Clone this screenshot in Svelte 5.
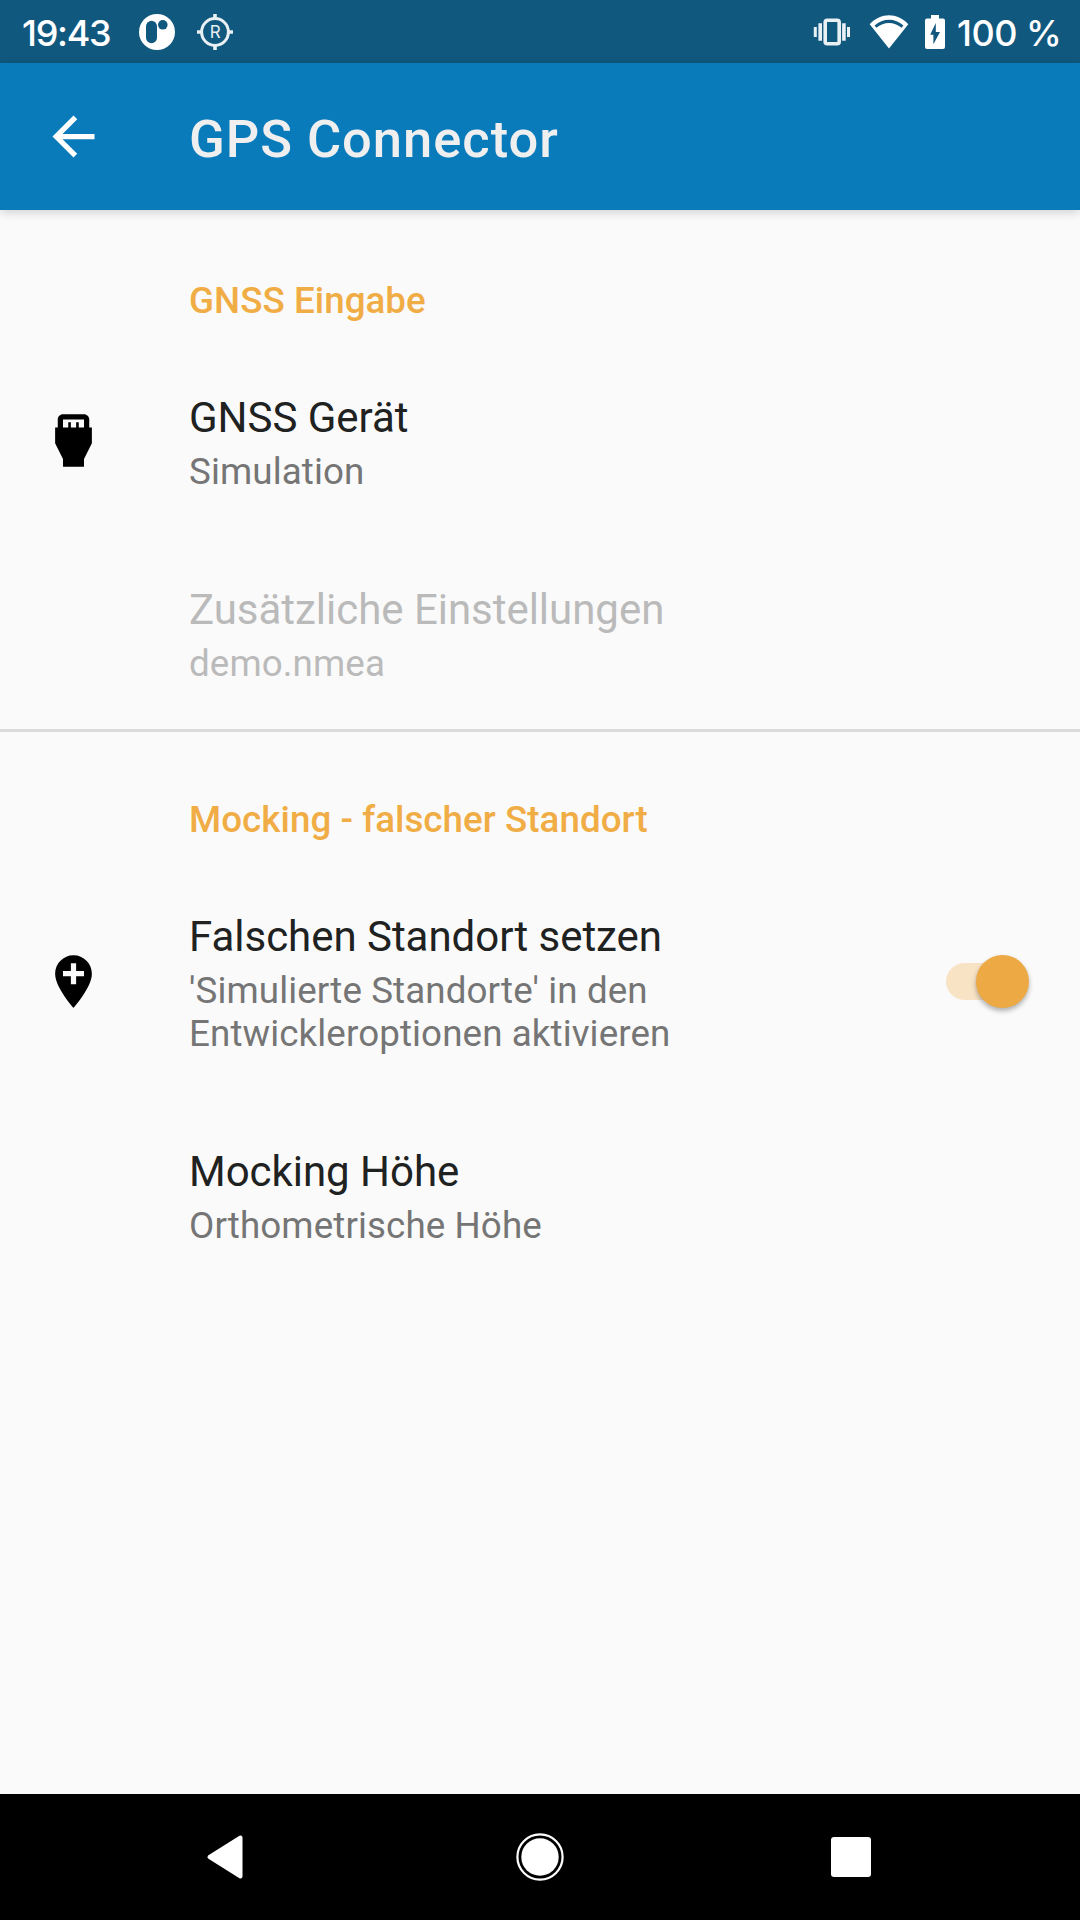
<script lang="ts">
  let mocking = true;

  function toggleMocking() {
    mocking = !mocking;
  }
</script>

<div class="screen">
  <div class="status">
    <span class="clock">19:43</span>
    <svg class="app-icon" width="38" height="38" viewBox="0 0 38 38">
      <circle cx="19" cy="19" r="18" fill="#fff" />
      <rect x="8" y="7.8" width="11" height="22.4" rx="5.5" fill="#11587f" />
      <circle cx="24.8" cy="11.8" r="4.8" fill="#11587f" />
    </svg>
    <svg width="38" height="38" viewBox="0 0 38 38">
      <circle cx="19" cy="19" r="13.4" fill="none" stroke="#e9f0f4" stroke-width="3" />
      <path d="M19 1v5M19 32v5M1 19h5M32 19h5" stroke="#e9f0f4" stroke-width="3.6" />
      <text x="19.2" y="25" text-anchor="middle">R</text>
    </svg>
    <span class="spacer"></span>
    <svg class="vibrate" width="38" height="28" viewBox="0 0 38 28">
      <rect x="12.2" y="2.2" width="14" height="23.6" rx="2" fill="none" stroke="#e9f0f4" stroke-width="3.6" />
      <path d="M2.3 9v10M35.5 9v10" stroke="#e9f0f4" stroke-width="3" />
      <path d="M7.2 5.3v17.4M30.9 5.3v17.4" stroke="#e9f0f4" stroke-width="3.6" />
    </svg>
    <svg class="wifi" width="40" height="34" viewBox="0 0 40 34">
      <path d="M.7 9.2C12-2.6 28-2.6 39.3 9.2L20 33.4Z" fill="#fff" />
      <path d="M5.6 10.5C14 2.9 26 2.9 34.4 10.5L32.6 12.8C25 6.5 15 6.5 7.4 12.8Z" fill="#11587f" />
    </svg>
    <svg class="battery" width="20" height="34" viewBox="0 0 20 34">
      <path d="M6 0h8v3.4h4a2 2 0 0 1 2 2V32a2 2 0 0 1-2 2H2a2 2 0 0 1-2-2V5.4a2 2 0 0 1 2-2h4Z" fill="#fff" />
      <path d="M10.8 8v9h4.2L8.4 29.2v-9.4H5.2Z" fill="#11587f" />
    </svg>
    <span class="level">100 %</span>
  </div>

  <header>
    <svg width="63" height="63" viewBox="0 0 24 24">
      <path d="M20 11H7.83l5.59-5.59L12 4l-8 8 8 8 1.41-1.41L7.83 13H20v-2z" fill="#fff" />
    </svg>
    <h1>GPS Connector</h1>
  </header>

  <main>
    <section>
      <h2>GNSS Eingabe</h2>
      <div class="pref">
        <div class="icon">
          <svg width="63" height="63" viewBox="0 0 24 24">
            <path d="M18 7V4c0-1.1-.9-2-2-2H8c-1.1 0-2 .9-2 2v3H5v6l3 6v3h8v-3l3-6V7h-1zM8 4h8v3h-2V5h-1v2h-2V5h-1v2H8V4z" />
          </svg>
        </div>
        <div class="body">
          <div class="title">GNSS Gerät</div>
          <div class="summary">Simulation</div>
        </div>
      </div>
      <div class="pref disabled">
        <div class="icon"></div>
        <div class="body">
          <div class="title">Zusätzliche Einstellungen</div>
          <div class="summary">demo.nmea</div>
        </div>
      </div>
    </section>

    <section class="divided">
      <h2>Mocking - falscher Standort</h2>
      <div class="pref">
        <div class="icon">
          <svg width="63" height="63" viewBox="0 0 24 24">
            <path d="M12 2C8.14 2 5 5.14 5 9c0 5.25 7 13 7 13s7-7.75 7-13c0-3.86-3.14-7-7-7zm4 8h-3v3h-2v-3H8V8h3V5h2v3h3v2z" />
          </svg>
        </div>
        <div class="body">
          <div class="title">Falschen Standort setzen</div>
          <div class="summary">'Simulierte Standorte' in den<br />Entwickleroptionen aktivieren</div>
        </div>
        <button
          class="switch"
          class:on={mocking}
          role="switch"
          aria-checked={mocking}
          aria-label="Falschen Standort setzen"
          on:click={toggleMocking}
        >
          <span class="thumb"></span>
        </button>
      </div>
      <div class="pref">
        <div class="icon"></div>
        <div class="body">
          <div class="title">Mocking Höhe</div>
          <div class="summary">Orthometrische Höhe</div>
        </div>
      </div>
    </section>
  </main>

  <nav>
    <svg width="48" height="48" viewBox="0 0 48 48">
      <path d="M35.500 4.500v39L4.500 24Z" fill="#fff" stroke="#fff" stroke-width="4" stroke-linejoin="round" />
    </svg>
    <svg width="48" height="48" viewBox="0 0 48 48">
      <circle cx="24" cy="24" r="22.6" fill="none" stroke="#fff" stroke-width="2.2" />
      <circle cx="24" cy="24" r="18.7" fill="#fff" />
    </svg>
    <svg width="48" height="48" viewBox="0 0 48 48">
      <rect x="4" y="4" width="40" height="40" rx="3" fill="#fff" />
    </svg>
  </nav>
</div>

<style>
  :global(body) {
    margin: 0;
  }
  .screen {
    display: flex;
    flex-direction: column;
    width: 1080px;
    height: 1920px;
    background: #fafafa;
    font-family: Roboto, sans-serif;
    overflow: hidden;
  }
  svg {
    display: block;
    flex: none;
  }
  .status {
    display: flex;
    align-items: center;
    box-sizing: border-box;
    height: 63px;
    padding: 0 22px;
    background: #11587f;
    color: #fff;
    font: 500 36px/63px Inter, sans-serif;
    white-space: nowrap;
  }
  .status text {
    font: 400 17px Inter, sans-serif;
    fill: #e9f0f4;
  }
  .clock {
    width: 116px;
    padding-top: 4px;
    letter-spacing: -1.3px;
  }
  .app-icon {
    margin-right: 20px;
  }
  .spacer {
    flex: 1;
  }
  .vibrate {
    margin-right: 18px;
  }
  .wifi {
    margin-right: 16px;
  }
  .battery {
    margin-right: 12px;
  }
  .level {
    width: 101px;
    padding-top: 4px;
    letter-spacing: -0.5px;
  }
  header {
    display: flex;
    align-items: center;
    height: 147px;
    padding-left: 42px;
    background: #097aba;
    box-shadow: 0 2px 10px rgba(0, 0, 0, 0.18);
  }
  h1 {
    margin: 4px 0 0 84px;
    font-size: 52.5px;
    line-height: 62px;
    font-weight: 500;
    letter-spacing: 0.95px;
    color: #efefef;
  }
  main {
    flex: 1;
  }
  .divided {
    box-shadow: inset 0 3px #dadbdb;
  }
  h2 {
    box-sizing: border-box;
    height: 135px;
    margin: 0;
    padding: 69px 0 0 189px;
    font-size: 36.75px;
    line-height: 43px;
    font-weight: 500;
    letter-spacing: 0.04px;
    color: #f1ad45;
  }
  .pref {
    display: flex;
    align-items: center;
    padding: 45px 51px 44px 42px;
  }
  .icon {
    width: 147px;
    padding-bottom: 2px;
  }
  .body {
    flex: 1;
  }
  .title {
    margin-bottom: 4px;
    font-size: 42px;
    line-height: 56px;
    letter-spacing: -0.03px;
    color: #202121;
  }
  .summary {
    font-size: 36.75px;
    line-height: 43px;
    letter-spacing: 0.1px;
    color: #757575;
  }
  .disabled .title,
  .disabled .summary {
    color: #bababa;
  }
  .switch {
    display: flex;
    align-items: center;
    width: 83px;
    height: 37px;
    margin-bottom: 2px;
    padding: 0;
    border: 0;
    border-radius: 19px;
    background: linear-gradient(90deg, #d0d0d0 60px, transparent 60px);
  }
  .switch.on {
    justify-content: flex-end;
    background: linear-gradient(90deg, #f8e3c5 60px, transparent 60px);
  }
  .thumb {
    width: 53px;
    height: 53px;
    flex: none;
    border-radius: 50%;
    background: #fff;
    box-shadow: 0 3px 5px rgba(0, 0, 0, 0.3);
  }
  .on .thumb {
    background: #eca944;
  }
  nav {
    display: flex;
    align-items: center;
    justify-content: center;
    gap: 263px;
    height: 126px;
    background: #000;
  }
</style>
